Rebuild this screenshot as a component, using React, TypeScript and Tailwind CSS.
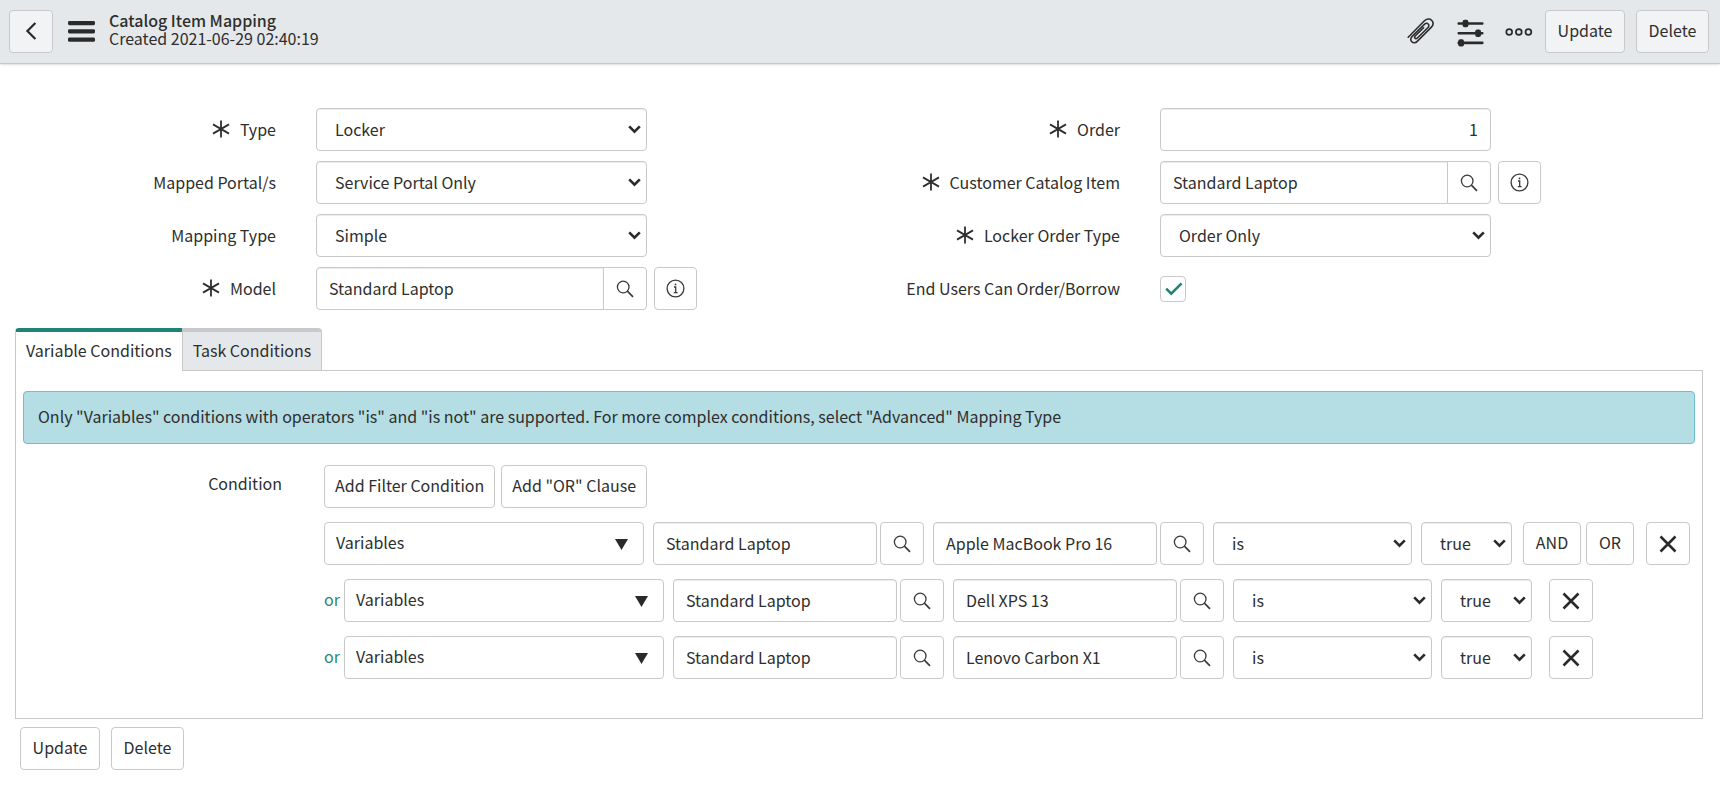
import React, { useState } from "react";

const controlClass =
  "h-[43px] w-full rounded border border-[#c9c9c9] bg-white pb-0.5 text-[#2e2e2e] shadow-[inset_0_1px_1px_rgba(0,0,0,0.08)] outline-none focus:border-[#1f8476]";

const buttonClass =
  "flex h-[43px] shrink-0 items-center justify-center rounded border border-[#c9c9c9] text-[#2e2e2e] hover:bg-gray-100";

interface IconProps {
  className?: string;
}

function SearchIcon() {
  return (
    <svg width="18" height="18" viewBox="0 0 18 18" fill="none" stroke="#3a3a3a" strokeWidth="1.3">
      <circle cx="7.2" cy="7" r="5.8" />
      <path d="M11.4 11.2 L17 16.8" strokeWidth="1.7" />
    </svg>
  );
}

function InfoIcon() {
  return (
    <svg width="19" height="19" viewBox="0 0 19 19" fill="none" stroke="#3a3a3a" strokeWidth="1.3">
      <circle cx="9.5" cy="9.5" r="8.4" />
      <path d="M8 8 H9.7 V13.4 M7.8 13.6 H11.6" />
      <circle cx="9.5" cy="5.4" r="0.9" fill="#3a3a3a" stroke="none" />
    </svg>
  );
}

function CloseIcon() {
  return (
    <svg width="18" height="18" viewBox="0 0 18 18" stroke="#2a2a2a" strokeWidth="2.6">
      <path d="M1.5 1.5 L16.5 16.5 M16.5 1.5 L1.5 16.5" />
    </svg>
  );
}

function RequiredMark() {
  return (
    <svg
      role="img"
      aria-label="Mandatory"
      width="18"
      height="18"
      viewBox="0 0 18 18"
      stroke="#2e2e2e"
      strokeWidth="1.8"
    >
      <path d="M9 0.5 V17.5 M1 4.4 L17 13.6 M17 4.4 L1 13.6" />
    </svg>
  );
}

function ChevronIcon({ className }: IconProps) {
  return (
    <svg
      className={className}
      width="13"
      height="9"
      viewBox="0 0 13 9"
      fill="none"
      stroke="#2a2a2a"
      strokeWidth="2.6"
    >
      <path d="M1.2 1.4 L6.5 6.7 L11.8 1.4" />
    </svg>
  );
}

function PaperclipIcon() {
  return (
    <svg
      width="28"
      height="28"
      viewBox="0 0 28 28"
      fill="none"
      stroke="#2e2e2e"
      strokeWidth="1.6"
      strokeLinecap="round"
    >
      <path d="M1.2 20.2 L17.2 4 C19.4 1.8 22.6 1.2 24.6 3.2 C26.8 5.4 26.2 8.2 24.2 10.4 L10.2 24.4 C8.6 26 6.4 26.4 4.8 24.8 C3.2 23.2 3.6 21 5.2 19.4 L17.4 7.4 C18.6 6.2 20.2 6 21.2 7 C22.2 8 22 9.6 20.8 10.8 L10.4 21 C9.6 21.8 8.6 21.9 8 21.2 C7.4 20.5 7.6 19.6 8.4 18.8 L16.6 10.8" />
    </svg>
  );
}

function SettingsIcon() {
  return (
    <svg width="27" height="28" viewBox="0 0 27 28" fill="#2a2a2a">
      <rect x="0.5" y="3.2" width="26" height="2.6" rx="1" />
      <rect x="0.5" y="12.9" width="26" height="2.6" rx="1" />
      <rect x="0.5" y="22.6" width="26" height="2.6" rx="1" />
      <rect x="5.6" y="0.8" width="5.8" height="7.4" rx="2" />
      <rect x="18.2" y="10.5" width="5.8" height="7.4" rx="2" />
      <rect x="1.2" y="20.2" width="5.8" height="7.4" rx="2" />
    </svg>
  );
}

function MoreIcon() {
  return (
    <svg width="28" height="10" viewBox="0 0 28 10" fill="none" stroke="#2a2a2a" strokeWidth="1.7">
      <circle cx="4.2" cy="5" r="2.9" />
      <circle cx="13.8" cy="5" r="2.9" />
      <circle cx="23.4" cy="5" r="2.9" />
    </svg>
  );
}

interface SelectProps {
  id?: string;
  label?: string;
  options: string[];
}

function Select({ id, label, options }: SelectProps) {
  return (
    <div className="relative w-full">
      <select id={id} aria-label={label} className={`${controlClass} appearance-none pr-8 pl-[18px]`}>
        {options.map((option) => (
          <option key={option}>{option}</option>
        ))}
      </select>
      <ChevronIcon className="pointer-events-none absolute top-[17px] right-[6px]" />
    </div>
  );
}

interface ReferenceFieldProps {
  id: string;
  defaultValue: string;
}

function ReferenceField({ id, defaultValue }: ReferenceFieldProps) {
  return (
    <div className="flex w-full">
      <input
        id={id}
        type="text"
        defaultValue={defaultValue}
        className={`${controlClass} min-w-0 flex-1 rounded-r-none px-3`}
      />
      <button
        type="button"
        aria-label="Lookup using list"
        className={`${buttonClass} -ml-px w-11 rounded-l-none bg-white`}
      >
        <SearchIcon />
      </button>
    </div>
  );
}

interface FieldRowProps {
  id: string;
  label: string;
  required?: boolean;
  info?: boolean;
  children: React.ReactNode;
}

function FieldRow({ id, label, required, info, children }: FieldRowProps) {
  return (
    <div className="grid h-[43px] grid-cols-[260px_331px_auto] items-center">
      <div className="flex items-center justify-end gap-[10px] pb-0.5">
        {required && <RequiredMark />}
        <label htmlFor={id}>{label}</label>
      </div>
      <div className="ml-10 flex w-[331px] items-center">{children}</div>
      {info && (
        <button
          type="button"
          aria-label={`Preview ${label}`}
          className={`${buttonClass} ml-[47px] w-[43px] bg-white`}
        >
          <InfoIcon />
        </button>
      )}
    </div>
  );
}

function LookupInput({ defaultValue, label }: { defaultValue: string; label: string }) {
  return (
    <div className="flex shrink-0 gap-[3px]">
      <div className="w-56">
        <input
          type="text"
          aria-label={label}
          defaultValue={defaultValue}
          className={`${controlClass} px-3`}
        />
      </div>
      <button type="button" aria-label={`Lookup ${label}`} className={`${buttonClass} w-11 bg-white`}>
        <SearchIcon />
      </button>
    </div>
  );
}

interface ConditionRowProps {
  item: string;
  variable: string;
  first?: boolean;
}

function ConditionRow({ item, variable, first }: ConditionRowProps) {
  return (
    <div className="flex items-center">
      {!first && <span className="w-5 shrink-0 pb-1 text-[#2f8577]">or</span>}
      <div className="relative w-80 shrink-0">
        <select
          aria-label="Field"
          className="h-[43px] w-full appearance-none rounded border border-[#c9c9c9] bg-white px-[11px] pb-1 outline-none"
        >
          <option>Variables</option>
        </select>
        <svg
          className="pointer-events-none absolute top-[17px] right-4"
          width="13"
          height="11"
          viewBox="0 0 13 11"
          fill="#2a2a2a"
        >
          <path d="M0 0 H13 L6.5 11 Z" />
        </svg>
      </div>
      <div className="ml-[9px] flex shrink-0 gap-[9px]">
        <LookupInput defaultValue={item} label="Catalog item" />
        <LookupInput defaultValue={variable} label="Variable" />
        <div className="w-[199px]">
          <Select label="Operator" options={["is", "is not"]} />
        </div>
        <div className="w-[91px]">
          <Select label="Value" options={["true", "false"]} />
        </div>
      </div>
      {first && (
        <div className="mr-[-5px] ml-[11px] flex gap-[5px]">
          <button type="button" className={`${buttonClass} w-[58px] bg-white pb-1`}>
            AND
          </button>
          <button type="button" className={`${buttonClass} w-12 bg-white pb-1`}>
            OR
          </button>
        </div>
      )}
      <button
        type="button"
        aria-label="Remove condition"
        className={`${buttonClass} ml-[17px] w-11 bg-white`}
      >
        <CloseIcon />
      </button>
    </div>
  );
}

const tabs = ["Variable Conditions", "Task Conditions"];

export default function App() {
  const [activeTab, setActiveTab] = useState(tabs[0]);
  const [canOrder, setCanOrder] = useState(true);

  return (
    <div className="min-h-screen bg-white font-['Source_Sans_Pro','Noto_Sans_CJK_SC',sans-serif] text-base leading-6 text-[#2e2e2e]">
      {/* Form header */}
      <header className="flex h-16 items-center border-b border-[#c6c8ca] bg-[#e5e8ea] pr-[11px] pb-px pl-[9px] shadow-sm">
        <button type="button" aria-label="Back" className={`${buttonClass} w-11 bg-[#f2f3f5]`}>
          <svg width="12" height="18" viewBox="0 0 12 18" fill="none" stroke="#2a2a2a" strokeWidth="2.2">
            <path d="M10.4 1 L2.4 9 L10.4 17" />
          </svg>
        </button>
        <button type="button" aria-label="Additional actions" className="ml-[15px]">
          <svg width="27" height="21" viewBox="0 0 27 21" fill="#2a2a2a">
            <rect y="0" width="27" height="4.2" rx="1.4" />
            <rect y="8.3" width="27" height="4.2" rx="1.4" />
            <rect y="16.6" width="27" height="4.2" rx="1.4" />
          </svg>
        </button>
        <div className="ml-[14px] pb-1 leading-[18px]">
          <h1 className="font-medium">Catalog Item Mapping</h1>
          <p>Created 2021-06-29 02:40:19</p>
        </div>
        <div className="ml-auto flex items-center">
          <button type="button" aria-label="Manage attachments">
            <PaperclipIcon />
          </button>
          <button type="button" aria-label="Personalize form" className="ml-[22px] pt-[3px]">
            <SettingsIcon />
          </button>
          <button type="button" aria-label="More options" className="ml-[21px] pt-0.5">
            <MoreIcon />
          </button>
          <button type="button" className={`${buttonClass} ml-3 w-20 bg-[#f2f3f5] pb-0.5`}>
            Update
          </button>
          <button type="button" className={`${buttonClass} ml-[11px] w-[73px] bg-[#f2f3f5] pb-0.5`}>
            Delete
          </button>
        </div>
      </header>

      <main className="px-4 pt-11">
        <form className="grid grid-cols-2">
          <div className="flex flex-col gap-[10px]">
            <FieldRow id="type" label="Type" required>
              <Select id="type" options={["Locker"]} />
            </FieldRow>
            <FieldRow id="portals" label="Mapped Portal/s">
              <Select id="portals" options={["Service Portal Only"]} />
            </FieldRow>
            <FieldRow id="mapping-type" label="Mapping Type">
              <Select id="mapping-type" options={["Simple", "Advanced"]} />
            </FieldRow>
            <FieldRow id="model" label="Model" required info>
              <ReferenceField id="model" defaultValue="Standard Laptop" />
            </FieldRow>
          </div>
          <div className="flex flex-col gap-[10px]">
            <FieldRow id="order" label="Order" required>
              <input
                id="order"
                type="text"
                defaultValue="1"
                className={`${controlClass} px-3 text-right`}
              />
            </FieldRow>
            <FieldRow id="catalog-item" label="Customer Catalog Item" required info>
              <ReferenceField id="catalog-item" defaultValue="Standard Laptop" />
            </FieldRow>
            <FieldRow id="locker-order" label="Locker Order Type" required>
              <Select id="locker-order" options={["Order Only"]} />
            </FieldRow>
            <FieldRow id="can-order" label="End Users Can Order/Borrow">
              <div className="relative size-[26px]">
                <input
                  id="can-order"
                  type="checkbox"
                  checked={canOrder}
                  onChange={(e) => setCanOrder(e.target.checked)}
                  className="block size-[26px] appearance-none rounded border border-[#c9c9c9] bg-white"
                />
                {canOrder && (
                  <svg
                    className="pointer-events-none absolute top-[6px] left-[5px]"
                    width="18"
                    height="14"
                    viewBox="0 0 18 14"
                    fill="none"
                    stroke="#1f8476"
                    strokeWidth="2.6"
                  >
                    <path d="M1.2 6.6 L6.2 11.6 L16.6 1.4" />
                  </svg>
                )}
              </div>
            </FieldRow>
          </div>
        </form>

        {/* Related tabs */}
        <div className="mt-[18px] mr-px -ml-px">
          <div role="tablist" className="relative z-10 flex">
            {tabs.map((tab) => (
              <button
                key={tab}
                type="button"
                role="tab"
                aria-selected={activeTab === tab}
                onClick={() => setActiveTab(tab)}
                className={`h-[43px] border-x border-t-4 px-[10px] ${
                  activeTab === tab
                    ? "rounded-tl border-x-[#c9c9c9] border-t-[#1f8476] bg-white pb-[3px]"
                    : "-ml-px rounded-tr border-b border-[#c9c9c9] bg-[#e5e8ea] pb-0.5"
                }`}
              >
                {tab}
              </button>
            ))}
          </div>
          <section className="-mt-px border border-[#c9c9c9] px-[7px] pt-5 pb-[39px]">
            <div className="rounded border border-[#6cc0cf] bg-[#b4dde4] px-[14px] pt-3 pb-[15px]">
              Only "Variables" conditions with operators "is" and "is not" are supported. For more
              complex conditions, select "Advanced" Mapping Type
            </div>
            <div className="mt-[21px] flex">
              <div className="w-[259px] shrink-0 pt-[6px] text-right">Condition</div>
              <div className="ml-[42px] flex flex-col gap-[14px]">
                <div className="flex gap-[6px]">
                  <button type="button" className={`${buttonClass} bg-white px-[10px] pb-1`}>
                    Add Filter Condition
                  </button>
                  <button type="button" className={`${buttonClass} bg-white px-[10px] pb-1`}>
                    Add "OR" Clause
                  </button>
                </div>
                <ConditionRow first item="Standard Laptop" variable="Apple MacBook Pro 16" />
                <ConditionRow item="Standard Laptop" variable="Dell XPS 13" />
                <ConditionRow item="Standard Laptop" variable="Lenovo Carbon X1" />
              </div>
            </div>
          </section>
        </div>

        <div className="mt-2 ml-1 flex gap-[11px] pb-6">
          <button type="button" className={`${buttonClass} w-20 bg-white pb-1`}>
            Update
          </button>
          <button type="button" className={`${buttonClass} w-[73px] bg-white pb-1`}>
            Delete
          </button>
        </div>
      </main>
    </div>
  );
}
